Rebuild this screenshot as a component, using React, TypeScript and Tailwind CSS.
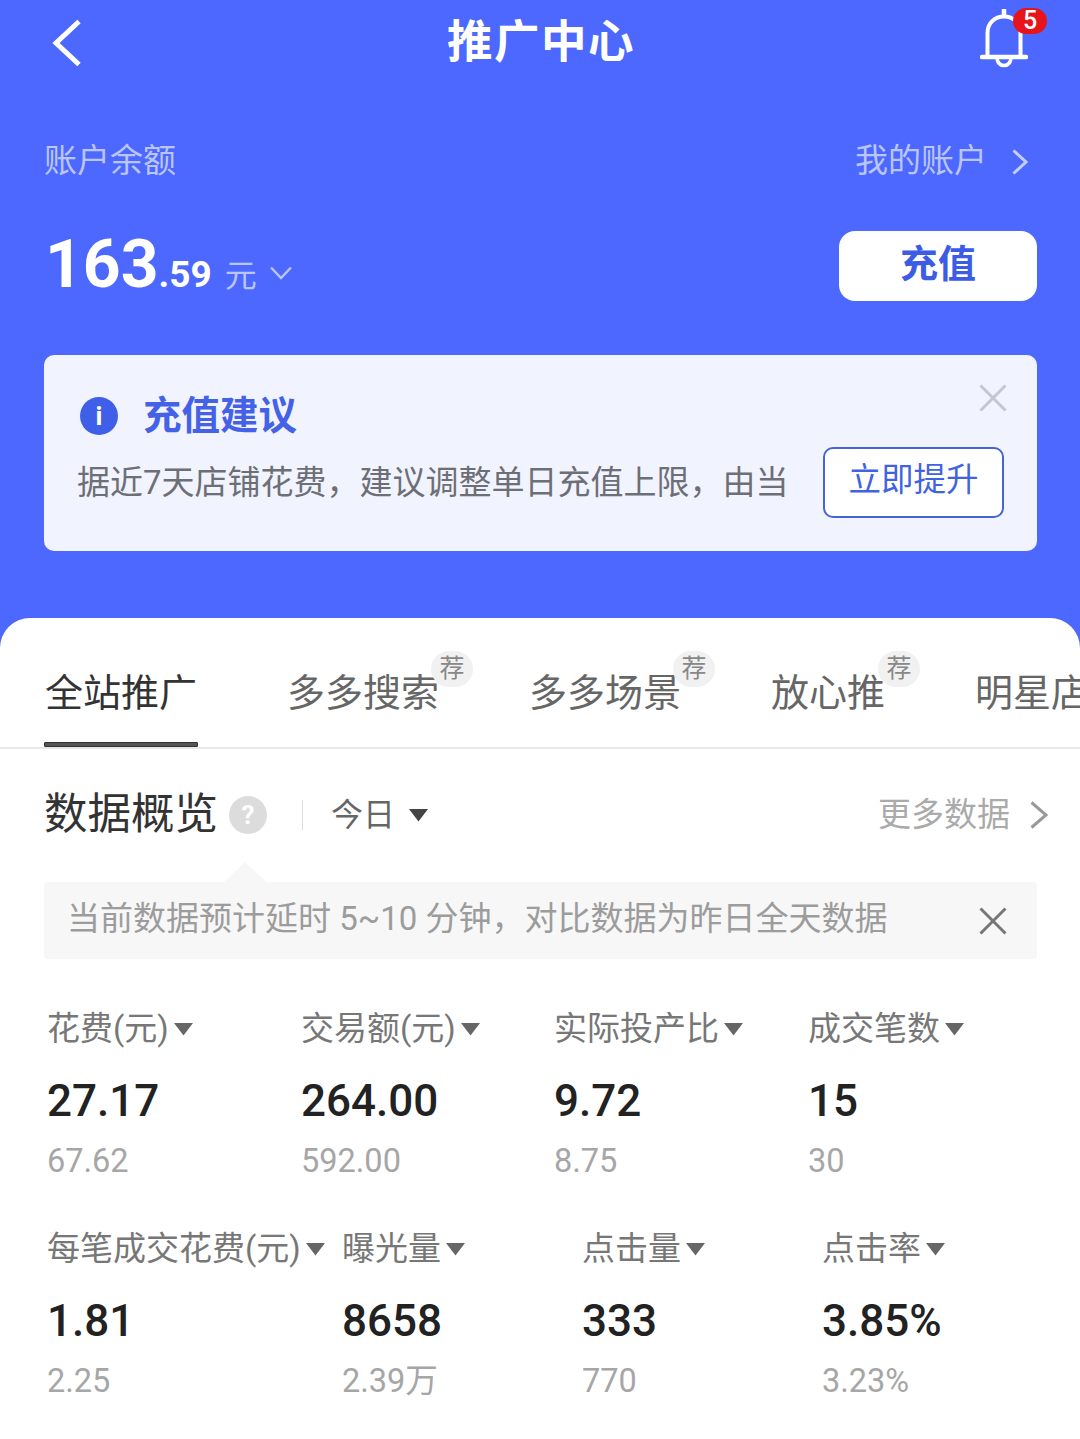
import React from "react";

const font = { fontFamily: '"Roboto","Noto Sans CJK SC",sans-serif' };

function Caret({ className = "" }: { className?: string }) {
  return (
    <svg width="19" height="14" viewBox="0 0 19 14" className={className}>
      <path d="M0 1h19L9.5 13.5z" fill="currentColor" />
    </svg>
  );
}

function Chevron({ className = "", w = 16, h = 26, sw = 3 }: { className?: string; w?: number; h?: number; sw?: number }) {
  return (
    <svg width={w} height={h} viewBox={`0 0 ${w} ${h}`} className={className} fill="none">
      <path d={`M1.5 1.5L${w - 2} ${h / 2}L1.5 ${h - 1.5}`} stroke="currentColor" strokeWidth={sw} />
    </svg>
  );
}

function CloseX({ className = "", size = 28 }: { className?: string; size?: number }) {
  return (
    <svg width={size} height={size} viewBox="0 0 28 28" className={className} fill="none">
      <path d="M1.5 1.5L26.5 26.5M26.5 1.5L1.5 26.5" stroke="currentColor" strokeWidth="3" />
    </svg>
  );
}

function Tab({ label, badge, active, badgeClass = "" }: { label: string; badge?: boolean; active?: boolean; badgeClass?: string }) {
  return (
    <div className="relative shrink-0 h-full flex flex-col items-stretch">
      <div className={`h-[50px] text-[38px] leading-[50px] whitespace-nowrap ${active ? "text-[#333]" : "text-[#666]"}`}>{label}</div>
      {active && <div className="absolute left-[-1px] right-[-1px] top-[74px] h-[5px] bg-[#555] rounded-[1px] border border-[#333]" />}
      {badge && (
        <div className={`absolute top-[-17px] w-[42px] h-[36px] rounded-full bg-[#f1f1f1] text-[#888] text-[25px] leading-[36px] text-center ${badgeClass}`}>荐</div>
      )}
    </div>
  );
}

function Metric({ label, value, sub }: { label: string; value: string; sub: string }) {
  return (
    <div className="flex flex-col">
      <div className="flex items-center h-[44px] text-[33px] text-[#777] whitespace-nowrap">
        <span>{label}</span>
        <Caret className="ml-[5px] text-[#666]" />
      </div>
      <div className="h-[54px] mt-[23px] text-[44px] leading-[54px] font-medium text-[#222]">{value}</div>
      <div className="h-[44px] mt-[11px] text-[32.5px] leading-[44px] text-[#a6a6a6]">{sub}</div>
    </div>
  );
}

export default function App() {
  return (
    <div style={font} className="w-[1080px] h-[1439px] overflow-hidden bg-[#4c68ff] flex flex-col">
      {/* Header */}
      <div className="h-[85px] shrink-0 px-[52px] flex items-center justify-between relative">
        <svg width="30" height="48" viewBox="0 0 30 48" fill="none" className="text-white">
          <path d="M27 2.5L4 24L27 45.5" stroke="currentColor" strokeWidth="5" />
        </svg>
        <div className="absolute left-[2px] right-0 top-[14px] text-center text-white text-[45.5px] leading-[58px] font-bold tracking-[1.5px]">推广中心</div>
        <div className="relative w-[64px] h-[70px] mr-[-19px] mt-[-18px]">
          <svg width="48" height="60" viewBox="0 0 48 60" fill="none" className="absolute left-[-3px] top-[10px] text-white">
            <path d="M24 1v6" stroke="currentColor" strokeWidth="4.5" strokeLinecap="round" />
            <path d="M7.5 47V24C7.5 14.5 14.5 7.5 24 7.5S40.5 14.5 40.5 24V47" stroke="currentColor" strokeWidth="4" />
            <path d="M2 48h44" stroke="currentColor" strokeWidth="4.5" strokeLinecap="round" />
            <path d="M17 50c1 4.500 3.500 6.500 7 6.500s6-2 7-6.500" stroke="currentColor" strokeWidth="3.500" />
          </svg>
          <div className="absolute left-[30px] top-[9px] w-[34px] h-[26px] rounded-full bg-[#e8141c] text-white text-[25px] leading-[26px] font-medium text-center">5</div>
        </div>
      </div>

      {/* Balance */}
      <div className="h-[50px] mt-[51px] shrink-0 pl-[44px] pr-[52px] flex items-center justify-between text-[33px] text-[#b9c5fb]">
        <span>账户余额</span>
        <div className="flex items-center">
          <span>我的账户</span>
          <Chevron className="ml-[25px] mt-[2px] text-[#c3cdfb]" />
        </div>
      </div>

      <div className="h-[70px] mt-[45px] shrink-0 pl-[45px] pr-[43px] flex items-center justify-between">
        <div className="flex items-baseline text-white font-bold">
          <span className="text-[66px] leading-[70px]">163</span>
          <span className="text-[37px]">.59</span>
          <span className="text-[32px] font-normal text-[#b9c5fb] ml-[13px]">元</span>
          <svg width="22" height="14" viewBox="0 0 22 14" fill="none" className="ml-[13px] -translate-y-[7px] text-[#b9c5fb]">
            <path d="M1 1.500L11 12L21 1.500" stroke="currentColor" strokeWidth="2.500" />
          </svg>
        </div>
        <div className="w-[198px] h-[70px] rounded-[16px] bg-white text-[#3c5ce6] text-[38px] leading-[66px] font-bold text-center">充值</div>
      </div>

      {/* Suggestion card */}
      <div className="relative h-[196px] mt-[54px] mx-[44px] w-[993px] shrink-0 rounded-[10px] bg-[#f1f4ff] pl-[33px] pt-[34px]">
        <div className="flex items-center h-[54px]">
          <div className="relative ml-[3px] w-[38px] h-[38px] rounded-full bg-[#3f5fe8] text-white text-[26px] leading-[38px] font-bold text-center">i</div>
          <span className="ml-[25px] text-[38.500px] leading-[54px] font-bold text-[#4562e6]">充值建议</span>
        </div>
        <div className="flex items-center justify-between mt-[4px] pr-[33px]">
          <span className="text-[33px] leading-[70px] text-[#6d6f76] whitespace-nowrap">据近7天店铺花费，建议调整单日充值上限，由当</span>
          <div className="w-[181px] h-[71px] rounded-[10px] border-2 border-[#4565d6] bg-white text-[#4263de] text-[32.500px] leading-[62px] text-center">立即提升</div>
        </div>
        <CloseX className="absolute right-[30px] top-[29px] text-[#c3c7d2]" />
      </div>

      {/* Sheet */}
      <div className="flex-1 mt-[67px] bg-white rounded-t-[30px] flex flex-col overflow-hidden">
        <div className="h-[131px] shrink-0 border-b-2 border-[#e9e9e9] overflow-hidden pl-[45px] pt-[50px] flex gap-[90px]">
          <Tab label="全站推广" active />
          <Tab label="多多搜索" badge badgeClass="left-[144px]" />
          <Tab label="多多场景" badge badgeClass="left-[144px]" />
          <Tab label="放心推" badge badgeClass="left-[107px]" />
          <Tab label="明星店铺" />
        </div>

        {/* Overview head */}
        <div className="h-[60px] mt-[36px] shrink-0 pl-[44px] pr-[32px] flex items-center">
          <span className="text-[43.500px] leading-[60px] text-[#333] whitespace-nowrap">数据概览</span>
          <div className="ml-[11px] w-[38px] h-[38px] rounded-full bg-[#dcdcdc] text-white text-[26px] leading-[38px] font-bold text-center">?</div>
          <div className="ml-[35px] w-[1px] h-[30px] bg-[#ddd]" />
          <span className="ml-[28px] text-[32px] text-[#666]">今日</span>
          <Caret className="ml-[14px] text-[#444]" />
          <span className="ml-auto text-[33px] text-[#aaa]">更多数据</span>
          <Chevron className="ml-[20px] text-[#999]" w={18} h={28} />
        </div>

        {/* Notice */}
        <div className="relative h-[77px] mt-[37px] mx-[44px] w-[993px] shrink-0 rounded-[4px] bg-[#f7f7f7] pl-[23px] flex items-center">
          <div className="absolute left-[180px] top-[-20px] w-0 h-0 border-x-[21px] border-x-transparent border-b-[20px] border-b-[#f7f7f7]" />
          <span className="text-[33px] text-[#9c9c9c] whitespace-nowrap mt-[-4px]">当前数据预计延时 5~10 分钟，对比数据为昨日全天数据</span>
          <CloseX className="absolute right-[30px] top-[25px] text-[#777]" />
        </div>

        {/* Metrics */}
        <div className="mt-[48px] pl-[47px] grid grid-cols-[254px_253px_254px_1fr]">
          <Metric label="花费(元)" value="27.17" sub="67.62" />
          <Metric label="交易额(元)" value="264.00" sub="592.00" />
          <Metric label="实际投产比" value="9.72" sub="8.75" />
          <Metric label="成交笔数" value="15" sub="30" />
        </div>
        <div className="mt-[44px] pl-[47px] grid grid-cols-[295px_240px_240px_1fr]">
          <Metric label="每笔成交花费(元)" value="1.81" sub="2.25" />
          <Metric label="曝光量" value="8658" sub="2.39万" />
          <Metric label="点击量" value="333" sub="770" />
          <Metric label="点击率" value="3.85%" sub="3.23%" />
        </div>
      </div>
    </div>
  );
}
